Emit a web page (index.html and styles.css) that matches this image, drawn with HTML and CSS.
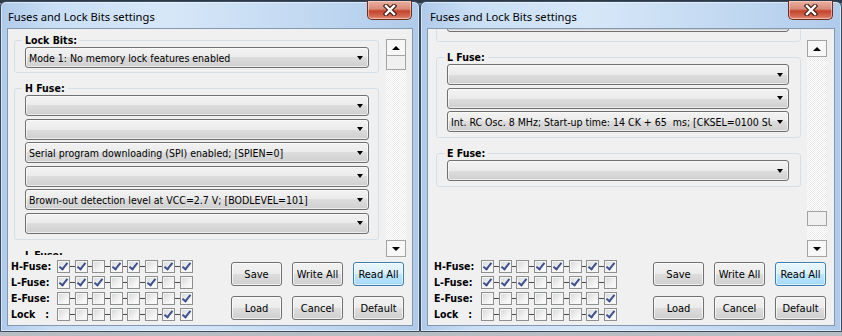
FILE: index.html
```html
<!DOCTYPE html>
<html lang="en">
<head>
    <meta charset="UTF-8">
    <meta name="viewport" content="width=device-width, initial-scale=1.0">
    <title>Fuses and Lock Bits settings</title>
    <link rel="stylesheet" href="styles.css">
</head>
<body>
    <div class="window win-a">
        <div class="titlebar">
            <span class="title">Fuses and Lock Bits settings</span>
            <button class="close">
                <svg width="14" height="12" viewBox="0 0 14 12">
                    <path d="M3 2 L11 10 M11 2 L3 10" stroke="#43201a" stroke-width="4.6" stroke-linecap="square"/>
                    <path d="M3 2 L11 10 M11 2 L3 10" stroke="#fff" stroke-width="2.4" stroke-linecap="square"/>
                </svg>
            </button>
        </div>
        <div class="client">
            <div class="panel">
                <div class="view">
                    <fieldset class="group lock">
                        <legend>Lock Bits:</legend>
                        <div class="combo"><span class="val">Mode 1: No memory lock features enabled</span></div>
                    </fieldset>
                    <fieldset class="group">
                        <legend>H Fuse:</legend>
                        <div class="combo"><span class="val"></span></div>
                        <div class="combo"><span class="val"></span></div>
                        <div class="combo"><span class="val">Serial program downloading (SPI) enabled; [SPIEN=0]</span></div>
                        <div class="combo"><span class="val"></span></div>
                        <div class="combo"><span class="val">Brown-out detection level at VCC=2.7 V; [BODLEVEL=101]</span></div>
                        <div class="combo"><span class="val"></span></div>
                    </fieldset>
                    <fieldset class="group">
                        <legend>L Fuse:</legend>
                        <div class="combo"><span class="val"></span></div>
                    </fieldset>
                </div>
                <div class="vscroll">
                    <div class="sb-btn up"></div>
                    <div class="sb-track"><div class="thumb"></div></div>
                    <div class="sb-btn down"></div>
                </div>
            </div>
            <div class="bottom">
                <div class="bits"></div>
                <div class="actions">
                    <button class="btn">Save</button>
                    <button class="btn">Write All</button>
                    <button class="btn focused">Read All</button>
                    <button class="btn">Load</button>
                    <button class="btn">Cancel</button>
                    <button class="btn">Default</button>
                </div>
            </div>
        </div>
    </div>

    <div class="window win-b">
        <div class="titlebar">
            <span class="title">Fuses and Lock Bits settings</span>
            <button class="close">
                <svg width="14" height="12" viewBox="0 0 14 12">
                    <path d="M3 2 L11 10 M11 2 L3 10" stroke="#43201a" stroke-width="4.6" stroke-linecap="square"/>
                    <path d="M3 2 L11 10 M11 2 L3 10" stroke="#fff" stroke-width="2.4" stroke-linecap="square"/>
                </svg>
            </button>
        </div>
        <div class="client">
            <div class="panel">
                <div class="view">
                    <!-- lock bits group scrolled out of sight, only its bottom edge shows -->
                    <fieldset class="group scrolled">
                        <div class="combo"><span class="val"></span></div>
                    </fieldset>
                    <fieldset class="group">
                        <legend>L Fuse:</legend>
                        <div class="combo"><span class="val"></span></div>
                        <div class="combo"><span class="val"></span></div>
                        <div class="combo"><span class="val">Int. RC Osc. 8 MHz; Start-up time: 14 CK + 65&nbsp; ms; [CKSEL=0100 SUT=10]</span></div>
                    </fieldset>
                    <fieldset class="group">
                        <legend>E Fuse:</legend>
                        <div class="combo"><span class="val"></span></div>
                    </fieldset>
                </div>
                <div class="vscroll">
                    <div class="sb-btn up"></div>
                    <div class="sb-track"><div class="thumb low"></div></div>
                    <div class="sb-btn down"></div>
                </div>
            </div>
            <div class="bottom">
                <div class="bits"></div>
                <div class="actions">
                    <button class="btn">Save</button>
                    <button class="btn">Write All</button>
                    <button class="btn focused">Read All</button>
                    <button class="btn">Load</button>
                    <button class="btn">Cancel</button>
                    <button class="btn">Default</button>
                </div>
            </div>
        </div>
    </div>

    <script>
        // fuse bytes as shown in the checkbox rows, msb first
        const fuses = [
            ['H-Fuse:', '11011011'],
            ['L-Fuse:', '11100100'],
            ['E-Fuse:', '00000001'],
            ['Lock   :', '00000011']
        ];

        document.querySelectorAll('.bits').forEach(box => {
            fuses.forEach(([name, bits]) => {
                const row = document.createElement('div');
                row.className = 'bit-row';

                const label = document.createElement('span');
                label.className = 'bit-label';
                label.textContent = name;
                row.appendChild(label);

                bits.split('').forEach((b, i) => {
                    if (i > 0) {
                        row.appendChild(document.createElement('i'));
                    }
                    const cb = document.createElement('span');
                    cb.className = b === '1' ? 'cb on' : 'cb';
                    row.appendChild(cb);
                });

                box.appendChild(row);
            });
        });
    </script>
</body>
</html>
```

FILE: styles.css
```css
* {
    box-sizing: border-box;
}

body {
    margin: 0;
    height: 336px;
    overflow: hidden;
    display: flex;
    align-items: flex-start;
    background: linear-gradient(#2d3a4a 0, #2d3a4a 3px, #7b8590 3px, #b9bec4 100%);
    font-family: "DejaVu Sans Condensed", "DejaVu Sans", sans-serif;
    font-size: 10.5px;
    color: #000;
}

/* window frame */
.window {
    height: 331px;
    margin-top: 1px;
    padding: 0 7px 6px;
    display: flex;
    flex-direction: column;
    border: 1px solid #3b4b5e;
    border-radius: 6px 6px 0 0;
    background: linear-gradient(to right, #afcaea 0, #c9def5 12%, #d6e7f8 40%, #c4daf2 70%, #b0cbea 100%);
    box-shadow: inset 0 0 0 1px rgba(255, 255, 255, 0.5);
}

.win-a {
    width: 420px;
}

.win-b {
    width: 422px;
}

.titlebar {
    height: 27px;
    display: flex;
    align-items: center;
    justify-content: space-between;
}

.title {
    font-family: "Noto Sans", "Open Sans", sans-serif;
    font-size: 11.2px;
    line-height: 16px;
    color: #000;
    margin-top: 2px;
}

.win-b .title {
    padding-left: 2px;
}

.close {
    align-self: flex-start;
    margin-top: -1px;
    width: 45px;
    height: 19px;
    padding: 0;
    display: flex;
    align-items: center;
    justify-content: center;
    border: 1px solid #6a2e24;
    border-top: none;
    border-radius: 0 0 5px 5px;
    background: linear-gradient(#eab0a2 0, #d88a76 45%, #c4432b 55%, #d26a52 85%, #e3927d 100%);
    box-shadow: inset 0 0 0 1px rgba(255, 220, 210, 0.55);
}

.win-b .close {
    margin-right: 1px;
}

/* client area */
.client {
    height: 296px;
    display: flex;
    flex-direction: column;
    background: #f0f0f0;
    outline: 1px solid #8497b0;
}

.panel {
    height: 228px;
    display: flex;
}

.view {
    flex: 1;
    height: 226px;
    overflow: hidden;
    padding-top: 5px;
}

.group {
    width: 365px;
    min-width: 0;
    margin: 0 0 9px 6px;
    padding: 0 9px 5px 10px;
    border: 1px solid #d5dfe5;
    border-radius: 3px;
}

.win-b .group {
    margin-left: 8px;
    padding-right: 11px;
}

.group.lock {
    padding-bottom: 4px;
}

.group.scrolled {
    margin-top: -24px;
    padding-bottom: 9px;
}

.group legend {
    font-weight: bold;
    line-height: 13px;
    padding: 0 3px;
    margin-left: -3px;
}

.combo {
    height: 21px;
    display: flex;
    align-items: center;
    border: 1px solid #707070;
    border-radius: 3px;
    background: linear-gradient(#f2f2f2 0, #ebebeb 50%, #dddddd 50%, #cfcfcf 100%);
    box-shadow: inset 0 0 0 1px rgba(255, 255, 255, 0.6);
}

.combo + .combo {
    margin-top: 2.5px;
}

.combo .val {
    flex: 1;
    overflow: hidden;
    white-space: nowrap;
    padding-left: 3px;
    margin-right: 5px;
}

.combo::after {
    content: "";
    width: 0;
    height: 0;
    margin-right: 5px;
    border-left: 3.5px solid transparent;
    border-right: 3.5px solid transparent;
    border-top: 4px solid #000;
}

/* scroll bar */
.vscroll {
    width: 20px;
    margin: 10px 6px 0 0;
    display: flex;
    flex-direction: column;
}

.win-b .vscroll {
    margin-top: 11px;
    margin-right: 7px;
}

.sb-btn {
    height: 17px;
    display: flex;
    align-items: center;
    justify-content: center;
    border: 1px solid #a3a3a3;
    background: #f7f7f7;
}

.sb-btn::after {
    content: "";
    width: 0;
    height: 0;
    border-left: 4px solid transparent;
    border-right: 4px solid transparent;
}

.sb-btn.up::after {
    border-bottom: 4px solid #000;
}

.sb-btn.down::after {
    border-top: 4px solid #000;
}

.sb-track {
    flex: 1;
    background: repeating-conic-gradient(#ffffff 0 25%, #ebebeb 0 50%) 0 0 / 2px 2px;
}

.thumb {
    height: 15px;
    margin-top: -1px;
    border: 1px solid #a3a3a3;
    background: #f0f0f0;
}

.thumb.low {
    margin-top: 154px;
}

/* fuse bits and buttons */
.bottom {
    flex: 1;
    display: flex;
    justify-content: space-between;
}

.bits {
    padding: 1px 0 0 3px;
}

.win-b .bits {
    padding-left: 6px;
}

.bit-row {
    height: 16px;
    display: flex;
    align-items: center;
}

.bit-label {
    width: 46px;
    font-weight: bold;
    white-space: pre;
}

.win-b .bit-label {
    width: 47px;
}

.cb {
    width: 13px;
    height: 13px;
    display: flex;
    align-items: center;
    justify-content: center;
    border: 1px solid #8e8f8f;
    background: linear-gradient(135deg, #d4d6d9 0, #f2f2f2 60%, #ffffff 100%);
    box-shadow: inset 0 0 0 1px #f6f6f6;
}

.cb.on::after {
    content: "";
    width: 3px;
    height: 7px;
    margin-top: -2px;
    border: solid #3d508c;
    border-width: 0 2px 2px 0;
    transform: rotate(38deg);
}

.bit-row i {
    width: 4.5px;
    height: 1px;
    background: #4a4a4a;
}

.actions {
    display: grid;
    grid-template-columns: repeat(3, 51px);
    grid-auto-rows: 24px;
    gap: 10px;
    margin: 5px 8px 0 0;
}

.btn {
    padding: 0;
    font: inherit;
    font-size: 11px;
    color: #000;
    border: 1px solid #707070;
    border-radius: 3px;
    background: linear-gradient(#f2f2f2 0, #ebebeb 50%, #dddddd 50%, #cfcfcf 100%);
    box-shadow: inset 0 0 0 1px rgba(255, 255, 255, 0.7);
}

.btn.focused {
    border-color: #3c7fb1;
    background: linear-gradient(#eaf6fd 0, #d9f0fc 50%, #bee6fd 50%, #a7d9f5 100%);
    box-shadow: inset 0 0 0 1px rgba(255, 255, 255, 0.6);
}
```
